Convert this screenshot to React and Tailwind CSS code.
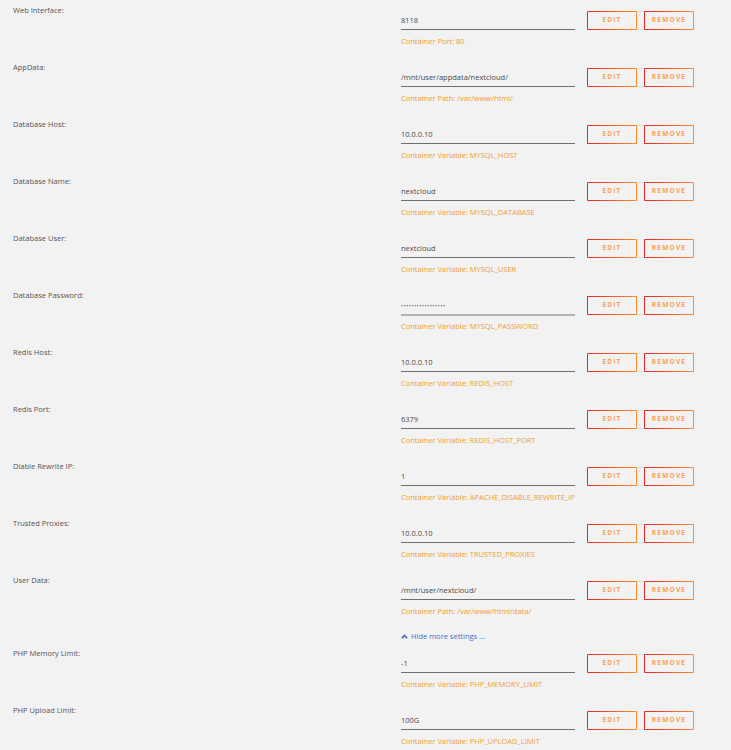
import React from "react";

const rows = [
  { label: "Web Interface:", value: "8118", desc: "Container Port: 80" },
  { label: "AppData:", value: "/mnt/user/appdata/nextcloud/", desc: "Container Path: /var/www/html/" },
  { label: "Database Host:", value: "10.0.0.10", desc: "Container Variable: MYSQL_HOST" },
  { label: "Database Name:", value: "nextcloud", desc: "Container Variable: MYSQL_DATABASE" },
  { label: "Database User:", value: "nextcloud", desc: "Container Variable: MYSQL_USER" },
  { label: "Database Password:", value: "•••••••••••••••••", desc: "Container Variable: MYSQL_PASSWORD", pw: true },
  { label: "Redis Host:", value: "10.0.0.10", desc: "Container Variable: REDIS_HOST" },
  { label: "Redis Port:", value: "6379", desc: "Container Variable: REDIS_HOST_PORT" },
  { label: "Diable Rewrite IP:", value: "1", desc: "Container Variable: APACHE_DISABLE_REWRITE_IP" },
  { label: "Trusted Proxies:", value: "10.0.0.10", desc: "Container Variable: TRUSTED_PROXIES" },
  { label: "User Data:", value: "/mnt/user/nextcloud/", desc: "Container Path: /var/www/html/data/" },
];

const rows2 = [
  { label: "PHP Memory Limit:", value: "-1", desc: "Container Variable: PHP_MEMORY_LIMIT" },
  { label: "PHP Upload Limit:", value: "100G", desc: "Container Variable: PHP_UPLOAD_LIMIT" },
];

function Btn({ children }) {
  return (
    <div className="w-[50px] h-[19px] border border-transparent rounded-[1px] flex items-center justify-center [background:linear-gradient(#f2f2f2,#f2f2f2)_padding-box,linear-gradient(to_right,#e22828,#ff8c2f)_border-box]">
      <span className="text-[6.5px] font-bold tracking-[1.2px] text-[#f7a25a] leading-none">{children}</span>
    </div>
  );
}

function Row({ r }) {
  return (
    <div className="flex h-[57px]">
      <div className="w-[401px] pl-[13px] pt-[5px] text-[7.5px] leading-[10px] text-[#555]">{r.label}</div>
      <div className="flex flex-col">
        <div className="flex">
          <div
            className={
              "w-[174px] pt-[15px] text-[7.5px] leading-[10px] text-[#4a4a4a] " +
              (r.pw ? "border-b-2 border-[#b4b4b4] h-[31px]" : "border-b border-[#6e6e6e] h-[30px]")
            }
          >
            {r.pw ? <span className="text-[5px] tracking-[0.75px] text-[#444]">{r.value}</span> : r.value}
          </div>
          <div className="ml-[12px] mt-[11px] flex gap-[7px]">
            <Btn>EDIT</Btn>
            <Btn>REMOVE</Btn>
          </div>
        </div>
        <div className={"text-[7.5px] leading-[10px] text-[#f0a030] " + (r.pw ? "mt-[5px]" : "mt-[6px]")}>{r.desc}</div>
      </div>
    </div>
  );
}

export default function App() {
  return (
    <div className="w-[731px] h-[750px] overflow-hidden bg-[#f2f2f2] font-['Open_Sans',sans-serif]">
      {rows.map((r, i) => (
        <Row key={i} r={r} />
      ))}
      <div className="h-[14px] mt-[2px] pl-[401px] flex items-center gap-[3px] text-[7.5px] leading-[10px] text-[#486dba]">
        <svg width="7" height="5" viewBox="0 0 7 5" className="mt-[1px]">
          <path d="M0.8 4.2 L3.5 1.4 L6.2 4.2" fill="none" stroke="#486dba" strokeWidth="1.6" />
        </svg>
        <span>Hide more settings ...</span>
      </div>
      {rows2.map((r, i) => (
        <Row key={i} r={r} />
      ))}
    </div>
  );
}
